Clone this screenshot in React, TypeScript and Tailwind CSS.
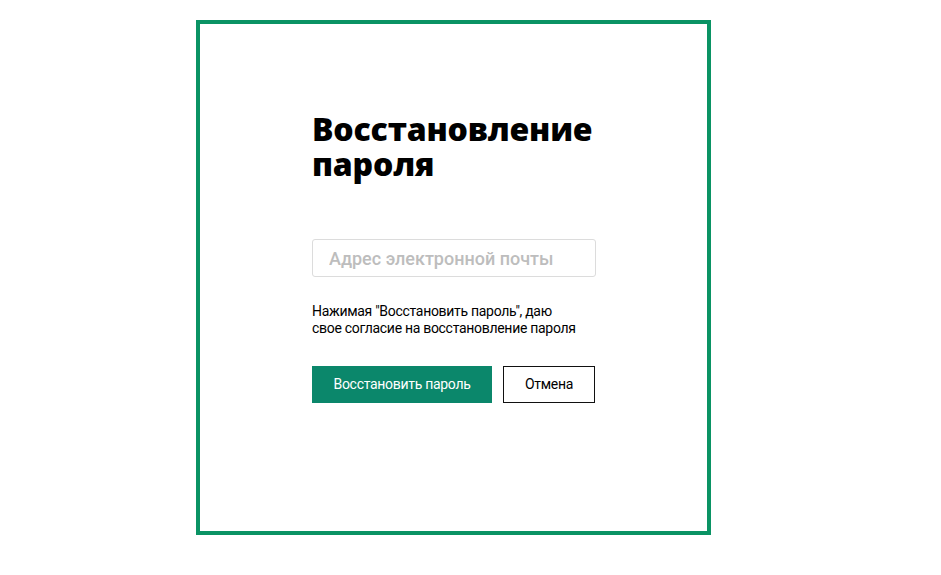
import React from 'react';

export default function App() {
  return (
    <div className="min-h-[575px] w-full bg-white">
      <div className="ml-[196px] pt-[20px]">
        <div className="box-border flex h-[515px] w-[515px] flex-col border-[4px] border-[#0a9364] pl-[112px] pt-[87px]">
          <h1 className="w-[300px] font-['Open_Sans',sans-serif] text-[32px] font-extrabold leading-[35px] tracking-[-0.2px] text-black">
            Восстановление
            <br />
            пароля
          </h1>

          <input
            type="email"
            placeholder="Адрес электронной почты"
            className="mt-[58px] box-border h-[38px] w-[284px] rounded-[3px] border border-[#dcdcdc] px-[16px] font-['Roboto',sans-serif] text-[18px] font-medium tracking-[0px] text-black outline-none placeholder:text-[#bdbdbd]"
          />

          <p className="mt-[26px] font-['Roboto',sans-serif] text-[14px] leading-[17px] tracking-[-0.3px] text-black">
            Нажимая "Восстановить пароль", даю
            <br />
            свое согласие на восстановление пароля
          </p>

          <div className="mt-[29px] flex gap-[11px]">
            <button
              type="button"
              className="h-[37px] w-[180px] bg-[#0b876b] font-['Roboto',sans-serif] text-[14px] tracking-[-0.3px] text-white"
            >
              Восстановить пароль
            </button>
            <button
              type="button"
              className="box-border h-[37px] w-[92px] border border-[#111] bg-white font-['Roboto',sans-serif] text-[14px] tracking-[-0.3px] text-black"
            >
              Отмена
            </button>
          </div>
        </div>
      </div>
    </div>
  );
}
